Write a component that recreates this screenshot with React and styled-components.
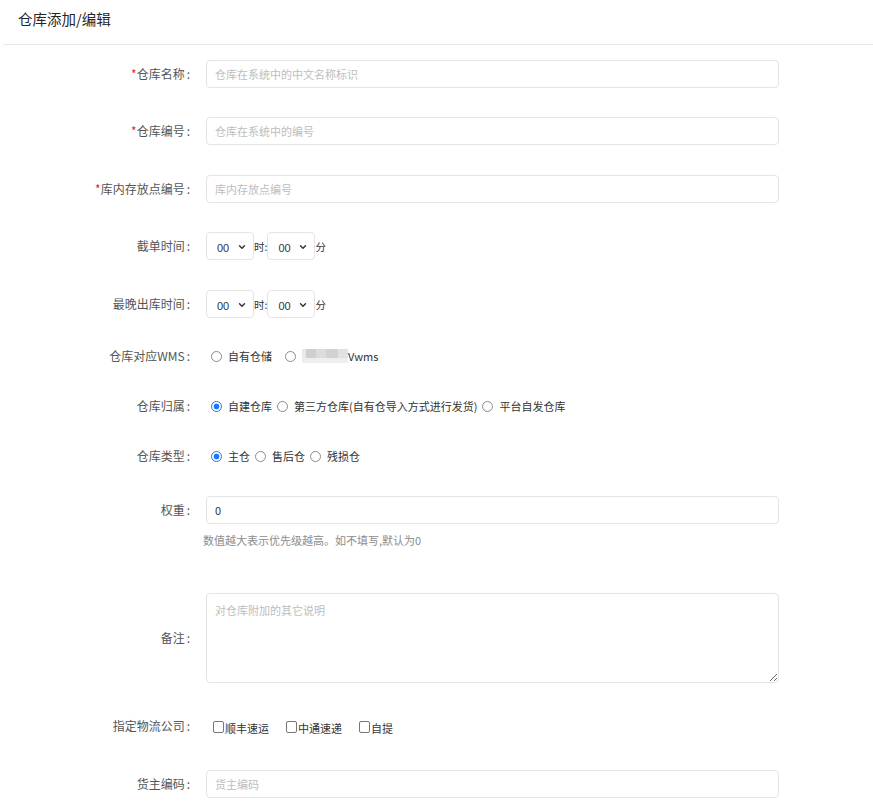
import React from 'react';
import styled, { createGlobalStyle } from 'styled-components';
import { ChevronDown } from 'lucide-react';

const GlobalStyle = createGlobalStyle`
  * { box-sizing: border-box; }
  body {
    margin: 0;
    background: #fff;
    font-family: "Noto Sans CJK SC", "Noto Sans", "Liberation Sans", sans-serif;
    color: #333;
  }
`;

const Page = styled.div`
  width: 873px;
  min-height: 809px;
  background: #fff;
`;

const Header = styled.div`
  height: 45px;
  margin-left: 3px;
  padding-left: 15px;
  display: flex;
  align-items: center;
  border-bottom: 1px solid #e8e8e8;
  padding-bottom: 8px;
  font-size: 14.5px;
  color: #262626;
`;

const Form = styled.div`
  padding-top: 15px;
`;

const Row = styled.div`
  display: flex;
  align-items: ${props => (props.$top ? 'flex-start' : 'center')};
  min-height: ${props => props.$h || 28}px;
  margin-bottom: ${props => props.$mb ?? 29}px;
`;

const Label = styled.div`
  width: 190px;
  flex: none;
  text-align: right;
  font-size: 12px;
  color: #555;
  white-space: nowrap;
  align-self: ${props => (props.$top ? 'flex-start' : 'center')};
  line-height: 28px;
`;

const Star = styled.span`
  color: #f5222d;
`;

const Colon = styled.span`
  margin-left: 2px;
`;

const Control = styled.div`
  margin-left: 16px;
  width: 573px;
  display: flex;
  align-items: center;
  flex-wrap: wrap;
`;

const Input = styled.input`
  width: 573px;
  height: 28px;
  border: 1px solid #e4e4e4;
  border-radius: 4px;
  padding: 0 8px;
  font-family: inherit;
  font-size: 11px;
  color: #333;
  outline: none;
  &::placeholder { color: #bdbdbd; }
`;

const TextArea = styled.textarea`
  width: 573px;
  height: 90px;
  border: 1px solid #e4e4e4;
  border-radius: 4px;
  padding: 8px 8px;
  font-family: inherit;
  font-size: 11px;
  color: #333;
  outline: none;
  display: block;
  &::placeholder { color: #bdbdbd; }
`;

const Help = styled.div`
  margin: 8px 0 0 -3px;
  font-size: 11px;
  color: #8c8c8c;
  width: 100%;
`;

const SelectBox = styled.div`
  position: relative;
  width: 48px;
  height: 28px;
  border: 1px solid #e4e4e4;
  border-radius: 4px;
  background: #fff;
  svg {
    position: absolute;
    right: 6px;
    top: 9px;
    pointer-events: none;
  }
`;

const Select = styled.select`
  appearance: none;
  border: none;
  background: transparent;
  width: 100%;
  height: 100%;
  padding-left: 10px;
  font-family: "Liberation Sans", sans-serif;
  font-size: 11px;
  color: #333;
  outline: none;
`;

const Unit = styled.span`
  font-size: 10.5px;
  color: #333;
`;

const Option = styled.label`
  display: inline-flex;
  align-items: center;
  font-size: 11px;
  color: #333;
  margin-right: ${props => props.$mr ?? 0}px;
`;

const Radio = styled.input.attrs({ type: 'radio' })`
  appearance: none;
  width: 11px;
  height: 11px;
  margin: 0 6px 0 5px;
  border-radius: 50%;
  border: 1px solid #8c8c8c;
  background: #fff;
  &:checked {
    border-color: #1677ff;
    background: radial-gradient(circle, #1677ff 0 2.6px, #fff 3.2px);
  }
`;

const Check = styled.input.attrs({ type: 'checkbox' })`
  appearance: none;
  width: 11px;
  height: 12px;
  margin: 0 1px 0 7px;
  border: 1px solid #767676;
  border-radius: 2px;
  background: #fff;
`;

const CheckText = styled.span`
  font-size: 11px;
  color: #333;
  margin-right: 10px;
`;

const Redacted = styled.span`
  display: inline-block;
  width: 46px;
  height: 14px;
  background:
    linear-gradient(to bottom, transparent 0 9px, #eeeeee 9px 14px),
    linear-gradient(to right, #e9e9e9 0 4px, #cfcfcf 4px 14px, #dcdcdc 14px 24px, #d2d2d2 24px 36px, #e2e2e2 36px 46px);
`;

const hours = ['00', '01', '02', '03', '04', '05', '06', '07', '08', '09', '10', '11', '12'];

const TimePick = () => (
  <Control>
    <SelectBox>
      <Select defaultValue="00">
        {hours.map(h => <option key={h}>{h}</option>)}
      </Select>
      <ChevronDown size={10} strokeWidth={3.4} color="#333" />
    </SelectBox>
    <Unit>时:</Unit>
    <SelectBox>
      <Select defaultValue="00">
        {hours.map(h => <option key={h}>{h}</option>)}
      </Select>
      <ChevronDown size={10} strokeWidth={3.4} color="#333" />
    </SelectBox>
    <Unit>分</Unit>
  </Control>
);

const FieldLabel = ({ required, children, top }) => (
  <Label $top={top}>
    {required && <Star>*</Star>}
    {children}
    <Colon>:</Colon>
  </Label>
);

const App = () => {
  return (
    <Page>
      <GlobalStyle />
      <Header>仓库添加/编辑</Header>
      <Form>
        <Row $mb={29}>
          <FieldLabel required>仓库名称</FieldLabel>
          <Control><Input placeholder="仓库在系统中的中文名称标识" /></Control>
        </Row>
        <Row $mb={30}>
          <FieldLabel required>仓库编号</FieldLabel>
          <Control><Input placeholder="仓库在系统中的编号" /></Control>
        </Row>
        <Row $mb={29}>
          <FieldLabel required>库内存放点编号</FieldLabel>
          <Control><Input placeholder="库内存放点编号" /></Control>
        </Row>
        <Row $mb={30}>
          <FieldLabel>截单时间</FieldLabel>
          <TimePick />
        </Row>
        <Row $mb={24}>
          <FieldLabel>最晚出库时间</FieldLabel>
          <TimePick />
        </Row>
        <Row $mb={22}>
          <FieldLabel>仓库对应WMS</FieldLabel>
          <Control>
            <Option $mr={8}><Radio name="wms" />自有仓储</Option>
            <Option><Radio name="wms" /><Redacted />Vwms</Option>
          </Control>
        </Row>
        <Row $mb={22}>
          <FieldLabel>仓库归属</FieldLabel>
          <Control>
            <Option><Radio name="own" defaultChecked />自建仓库</Option>
            <Option><Radio name="own" />第三方仓库(自有仓导入方式进行发货)</Option>
            <Option><Radio name="own" />平台自发仓库</Option>
          </Control>
        </Row>
        <Row $mb={26}>
          <FieldLabel>仓库类型</FieldLabel>
          <Control>
            <Option><Radio name="type" defaultChecked />主仓</Option>
            <Option><Radio name="type" />售后仓</Option>
            <Option><Radio name="type" />残损仓</Option>
          </Control>
        </Row>
        <Row $top $mb={45}>
          <FieldLabel top>权重</FieldLabel>
          <Control>
            <Input defaultValue="0" />
            <Help>数值越大表示优先级越高。如不填写,默认为0</Help>
          </Control>
        </Row>
        <Row $mb={29}>
          <FieldLabel>备注</FieldLabel>
          <Control><TextArea placeholder="对仓库附加的其它说明" /></Control>
        </Row>
        <Row $mb={30}>
          <FieldLabel>指定物流公司</FieldLabel>
          <Control>
            <label><Check /><CheckText>顺丰速运</CheckText></label>
            <label><Check /><CheckText>中通速递</CheckText></label>
            <label><Check /><CheckText>自提</CheckText></label>
          </Control>
        </Row>
        <Row $mb={12}>
          <FieldLabel>货主编码</FieldLabel>
          <Control><Input placeholder="货主编码" /></Control>
        </Row>
      </Form>
    </Page>
  );
};

export default App;
